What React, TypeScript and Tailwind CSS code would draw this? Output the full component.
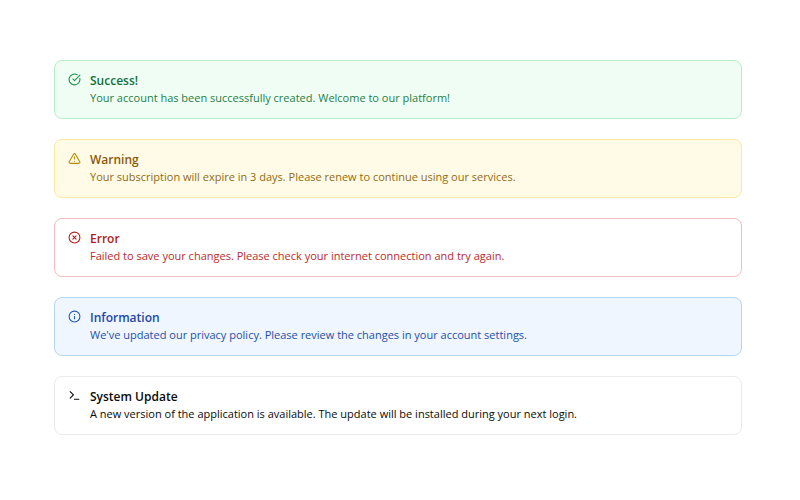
import { CircleCheckBig, CircleX, Info, Terminal, TriangleAlert, type LucideIcon } from "lucide-react";

type AlertItem = { icon: LucideIcon; title: string; text: string; box: string; mark: string; tone: string; body: string };

const alerts: AlertItem[] = [
  {
    icon: CircleCheckBig,
    title: "Success!",
    text: "Your account has been successfully created. Welcome to our platform!",
    box: "border-[#b9ecc9] bg-[#f0fdf4]",
    mark: "text-[#16934a]",
    tone: "text-[#15703a]",
    body: "text-[#1f7f47]",
  },
  {
    icon: TriangleAlert,
    title: "Warning",
    text: "Your subscription will expire in 3 days. Please renew to continue using our services.",
    box: "border-[#fde9a0] bg-[#fffbe6]",
    mark: "text-[#b98a04]",
    tone: "text-[#8a5a0e]",
    body: "text-[#946a12]",
  },
  {
    icon: CircleX,
    title: "Error",
    text: "Failed to save your changes. Please check your internet connection and try again.",
    box: "border-[#f3bcc0] bg-white",
    mark: "text-[#b91c1c]",
    tone: "text-[#b01c20]",
    body: "text-[#b92c2c]",
  },
  {
    icon: Info,
    title: "Information",
    text: "We've updated our privacy policy. Please review the changes in your account settings.",
    box: "border-[#b3d7ee] bg-[#eff6ff]",
    mark: "text-[#2058b8]",
    tone: "text-[#1e48a8]",
    body: "text-[#2450a8]",
  },
  {
    icon: Terminal,
    title: "System Update",
    text: "A new version of the application is available. The update will be installed during your next login.",
    box: "border-[#ebebeb] bg-white",
    mark: "text-[#0a0a0a]",
    tone: "text-[#0a0a0a]",
    body: "text-[#0a0a0a]",
  },
];

function Alert({ icon: Icon, title, text, box, mark, tone, body }: AlertItem) {
  return (
    <div role="alert" className={`flex gap-[9px] rounded-lg border px-[13px] pt-3 pb-[11px] ${box}`}>
      <Icon aria-hidden="true" className={`size-[13px] shrink-0 ${mark}`} />
      <div className="min-w-0">
        <h5 className={`text-[12px] leading-4 font-semibold ${tone}`}>{title}</h5>
        <p className={`text-[11px] leading-[18px] ${body}`}>{text}</p>
      </div>
    </div>
  );
}

export default function App() {
  return (
    <main className="flex min-h-screen flex-col gap-5 bg-white py-[60px] pr-[58px] pl-[54px] font-['Open_Sans',sans-serif]">
      {alerts.map((alert) => (
        <Alert key={alert.title} {...alert} />
      ))}
    </main>
  );
}
